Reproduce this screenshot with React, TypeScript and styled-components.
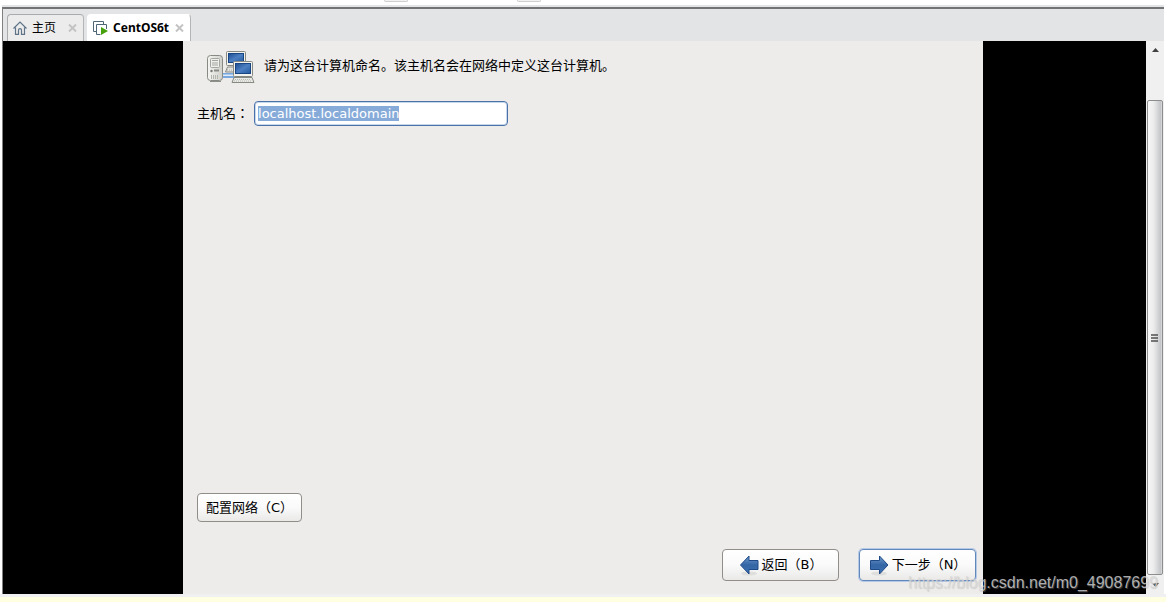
import React, { useEffect, useRef } from "react";
import styled, { createGlobalStyle } from "styled-components";

const GlobalStyle = createGlobalStyle`
  *, *::before, *::after { box-sizing: border-box; }
  body {
    margin: 0;
    background: #ffffff;
    color: #000000;
    font: 13px/16px "DejaVu Sans", "Noto Sans CJK SC", sans-serif;
  }
`;

const Page = styled.div`
  position: relative;
  display: flex;
  flex-direction: column;
  min-height: 100vh;
`;

const ToolbarEdge = styled.div`
  display: grid;
  grid-template-columns: 24px 24px;
  column-gap: 109px;
  height: 5px;
  padding-left: 384px;
`;

const ToolStub = styled.span`
  height: 2px;
  background: #f2f2f2;
  border: 1px solid #cfcfcf;
  border-top: 0;
  border-radius: 0 0 3px 3px;
`;

const Frame = styled.div`
  flex: 1;
  display: flex;
  flex-direction: column;
  margin: 0 2px;
  border-top: 2px solid #e3e4e6;
`;

const FrameInner = styled.div`
  flex: 1;
  display: flex;
  flex-direction: column;
  border-top: 2px solid #727374;
  border-left: 1px solid #808080;
  background: #e3e4e6;
`;

const TabBar = styled.nav`
  display: flex;
  gap: 3px;
  height: 32px;
  padding: 5px 4px 0;
`;

const Tab = styled.div<{ $active?: boolean }>`
  display: flex;
  align-items: center;
  height: 27px;
  padding: 0 6px 0 5px;
  gap: ${(p) => (p.$active ? 6 : 12)}px;
  border: 1px solid ${(p) => (p.$active ? "#ffffff" : "#a9abad")};
  border-right-color: #b4b5b7;
  border-bottom: 0;
  border-radius: 4px 4px 0 0;
  background: ${(p) => (p.$active ? "#ffffff" : "#ececed")};
`;

const TabLabel = styled.button<{ $active?: boolean }>`
  display: flex;
  align-items: center;
  gap: 5px;
  padding: 0;
  border: 0;
  background: none;
  color: #000000;
  font: ${(p) => (p.$active ? 700 : 400)} 12px/16px "Noto Sans", "Noto Sans CJK SC", sans-serif;
`;

const TabClose = styled.button`
  display: flex;
  padding: 0;
  border: 0;
  background: none;
`;

const Viewer = styled.div`
  flex: 1;
  display: grid;
  grid-template-columns: minmax(0, 1fr) 18px;
`;

const Console = styled.div`
  display: grid;
  grid-template-columns: minmax(0, 180fr) minmax(0, 800px) minmax(0, 163fr);
  background: #000000;
`;

const Installer = styled.main`
  grid-column: 2;
  display: flex;
  flex-direction: column;
  padding: 10px 7px 13px 14px;
  background: #edeceb;
`;

const Intro = styled.header`
  display: flex;
  align-items: center;
  gap: 9px;
  padding-left: 10px;
`;

const IntroText = styled.p`
  margin: 0;
  padding-bottom: 4px;
`;

const HostRow = styled.div`
  display: flex;
  align-items: center;
  gap: 5px;
  margin-top: 16px;
`;

const HostLabel = styled.label`
  font-family: "DejaVu Sans", "Noto Sans CJK TC", sans-serif;
`;

const HostInput = styled.input`
  width: 254px;
  height: 25px;
  padding: 0 3px;
  border: 1px solid #4a72a8;
  border-radius: 4px;
  outline: 0;
  box-shadow: inset 0 0 0 1px #c8d8ec;
  background: #ffffff;
  color: #000000;
  font: 13px/17px "DejaVu Sans", sans-serif;

  &::selection {
    background: #86abd9;
    color: #ffffff;
  }
`;

const PushButton = styled.button<{ $primary?: boolean }>`
  display: flex;
  align-items: center;
  justify-content: center;
  gap: 3px;
  padding: 0;
  border: 1px solid ${(p) => (p.$primary ? "#6287bb" : "#918e8a")};
  border-radius: 4px;
  background: linear-gradient(#ffffff, #fafafa 50%, #eae9e8);
  box-shadow: ${(p) => (p.$primary ? "0 0 0 1px #b5cae6" : "none")};
  color: #000000;
  font: inherit;
`;

const ConfigButton = styled(PushButton)`
  width: 105px;
  height: 29px;
  margin-top: auto;
`;

const StepButton = styled(PushButton)`
  width: 117px;
  height: 32px;
`;

const Footer = styled.footer`
  display: flex;
  justify-content: flex-end;
  gap: 20px;
  margin-top: 27px;
`;

const ScrollTrack = styled.div`
  display: grid;
  grid-template-rows: 59px 1fr 19px;
  padding: 0 1px;
  background: #f0f0f0;
`;

const ScrollArrow = styled.button`
  display: grid;
  place-items: center;
  padding: 0;
  border: 0;
  background: none;
`;

const UpArrow = styled(ScrollArrow)`
  height: 17px;
`;

const ScrollThumb = styled.div`
  display: grid;
  place-items: center;
  padding-right: 2px;
  border: 1px solid #8d8d8d;
  border-radius: 2px;
  background: linear-gradient(90deg, #f6f6f6, #ececec 40%, #c4c6c9 90%, #dddddd);
`;

const BottomEdge = styled.div`
  height: 8px;
  border-top: 3px solid #f0f0f2;
  background: #ffffe1;
`;

const Watermark = styled.span`
  position: absolute;
  right: 8px;
  bottom: 9px;
  color: rgba(215, 215, 215, 0.8);
  font: 16px/20px "Liberation Sans", sans-serif;
  text-shadow: 1px 1px 1px rgba(160, 160, 160, 0.4);
  pointer-events: none;
`;

const HomeIcon = () => (
  <svg width="14" height="14" viewBox="0 0 14 14" fill="none" stroke="#5f7587" strokeWidth="1.2" aria-hidden="true">
    <path d="M.5 7.5 7 1l6.5 6.5M2.5 6.5v6.8h3V9.2a1.5 1.5 0 0 1 3 0v4.1h3V6.5" />
  </svg>
);

const MachineIcon = () => (
  <svg width="15" height="14" viewBox="0 0 15 14" fill="none" aria-hidden="true">
    <path d="M3 10.5H.5V.5h10V3" stroke="#4f6677" />
    <path d="M7.5 13.5h-4v-10h10V8" stroke="#4f6677" />
    <path d="M8 6 15 10 8 14Z" fill="#45a00c" />
  </svg>
);

const CloseIcon = () => (
  <svg width="9" height="8" viewBox="0 0 9 8" stroke="#c3c3c3" strokeWidth="2" aria-hidden="true">
    <path d="m1 .5 7 7m0-7-7 7" />
  </svg>
);

const NetworkIcon = () => (
  <svg width="48" height="34" viewBox="0 0 48 34" aria-hidden="true">
    <defs>
      <linearGradient id="screen" x1="0" y1="0" x2="1" y2="1">
        <stop offset="0" stopColor="#1c4c91" />
        <stop offset=".5" stopColor="#4c80c2" />
        <stop offset="1" stopColor="#2459a0" />
      </linearGradient>
      <linearGradient id="tower" x1="0" x2="1">
        <stop offset="0" stopColor="#f5f5f3" />
        <stop offset="1" stopColor="#cfcfca" />
      </linearGradient>
    </defs>
    <path d="M20.5 16h18l1.5 5H18.5Z" fill="#e4e4e0" stroke="#878983" />
    <path d="M20 19h15" stroke="#aaaca6" strokeDasharray="1 1" />
    <rect x="19.5" y=".5" width="19" height="14" rx="1" fill="#f2f2ef" stroke="#878983" />
    <rect x="21.5" y="2.5" width="15" height="9" fill="url(#screen)" stroke="#194683" />
    <path d="M15 23h11M16 26h11" stroke="#76a7df" strokeWidth="2" />
    <path d="M16 24h10" stroke="#d7e8fb" />
    <rect x=".5" y="4.5" width="15" height="25" rx="3" fill="url(#tower)" stroke="#878983" />
    <path d="M3 30.5h11" stroke="#8c8e89" />
    <rect x="3.5" y="7.5" width="9" height="9" rx="1" fill="#eeeeec" stroke="#a3a59f" />
    <path d="M5 9.5h6M5 12h6M5 14h6" stroke="#a3a59f" />
    <circle cx="4.5" cy="20" r="1.2" fill="#777973" />
    <path d="M7 19.5h5" stroke="#888a85" strokeWidth="2" />
    <path d="M4.5 24v4m2-4v4m2-4v4m2-4v4" stroke="#b2b4ae" />
    <rect x="26.5" y="10.5" width="19" height="15" rx="1" fill="#f2f2ef" stroke="#878983" />
    <rect x="28.5" y="12.5" width="15" height="10" fill="url(#screen)" stroke="#194683" />
    <path d="M27 26.5h18l2 5H25Z" fill="#e9e9e6" stroke="#878983" />
    <path d="M28 28.5h16M27 30h18" stroke="#b9bbb5" strokeDasharray="1 1" />
  </svg>
);

const ArrowIcon = ({ forward }: { forward?: boolean }) => {
  const id = forward ? "arrow-next" : "arrow-back";
  return (
    <svg width="20" height="22" viewBox="0 0 20 22" aria-hidden="true">
      <defs>
        <linearGradient id={id} x1="0" y1="0" x2="0" y2="1">
          <stop offset="0" stopColor="#6f9bd0" />
          <stop offset=".5" stopColor="#3465a4" />
          <stop offset="1" stopColor="#3d72b4" />
        </linearGradient>
      </defs>
      <ellipse cx="10" cy="19.5" rx="8" ry="2" fill="#dededd" />
      <path
        d={forward ? "M1.5 6.5h9V2l8.5 9-8.5 9v-4.5h-9Z" : "M19 6.5h-9V2l-8.5 9 8.5 9v-4.5h9Z"}
        fill={`url(#${id})`}
        stroke="#204a87"
        strokeLinejoin="round"
      />
    </svg>
  );
};

export default function App() {
  const host = useRef<HTMLInputElement>(null);

  useEffect(() => {
    host.current?.focus();
    host.current?.select();
  }, []);

  return (
    <Page>
      <GlobalStyle />
      <ToolbarEdge>
        <ToolStub />
        <ToolStub />
      </ToolbarEdge>
      <Frame>
        <FrameInner>
          <TabBar>
            <Tab>
              <TabLabel type="button">
                <HomeIcon />
                主页
              </TabLabel>
              <TabClose type="button" aria-label="关闭主页">
                <CloseIcon />
              </TabClose>
            </Tab>
            <Tab $active>
              <TabLabel type="button" $active>
                <MachineIcon />
                CentOS6t
              </TabLabel>
              <TabClose type="button" aria-label="关闭 CentOS6t">
                <CloseIcon />
              </TabClose>
            </Tab>
          </TabBar>
          <Viewer>
            <Console>
              <Installer>
                <Intro>
                  <NetworkIcon />
                  <IntroText>请为这台计算机命名。该主机名会在网络中定义这台计算机。</IntroText>
                </Intro>
                <HostRow>
                  <HostLabel htmlFor="hostname">主机名：</HostLabel>
                  <HostInput id="hostname" ref={host} defaultValue="localhost.localdomain" spellCheck={false} />
                </HostRow>
                <ConfigButton type="button">配置网络（C）</ConfigButton>
                <Footer>
                  <StepButton type="button">
                    <ArrowIcon />
                    返回（B）
                  </StepButton>
                  <StepButton type="button" $primary>
                    <ArrowIcon forward />
                    下一步（N）
                  </StepButton>
                </Footer>
              </Installer>
            </Console>
            <ScrollTrack>
              <UpArrow type="button" aria-label="向上滚动">
                <svg width="7" height="4" viewBox="0 0 7 4" aria-hidden="true">
                  <path d="M3.5 0 7 4H0Z" fill="#404040" />
                </svg>
              </UpArrow>
              <ScrollThumb>
                <svg width="7" height="8" viewBox="0 0 7 8" stroke="#505050" aria-hidden="true">
                  <path d="M0 1h7M0 4h7M0 7h7" strokeWidth="1.5" />
                </svg>
              </ScrollThumb>
              <ScrollArrow type="button" aria-label="向下滚动">
                <svg width="7" height="4" viewBox="0 0 7 4" aria-hidden="true">
                  <path d="M3.5 4 7 0H0Z" fill="#404040" />
                </svg>
              </ScrollArrow>
            </ScrollTrack>
          </Viewer>
        </FrameInner>
      </Frame>
      <BottomEdge />
      <Watermark>https://blog.csdn.net/m0_49087699</Watermark>
    </Page>
  );
}
